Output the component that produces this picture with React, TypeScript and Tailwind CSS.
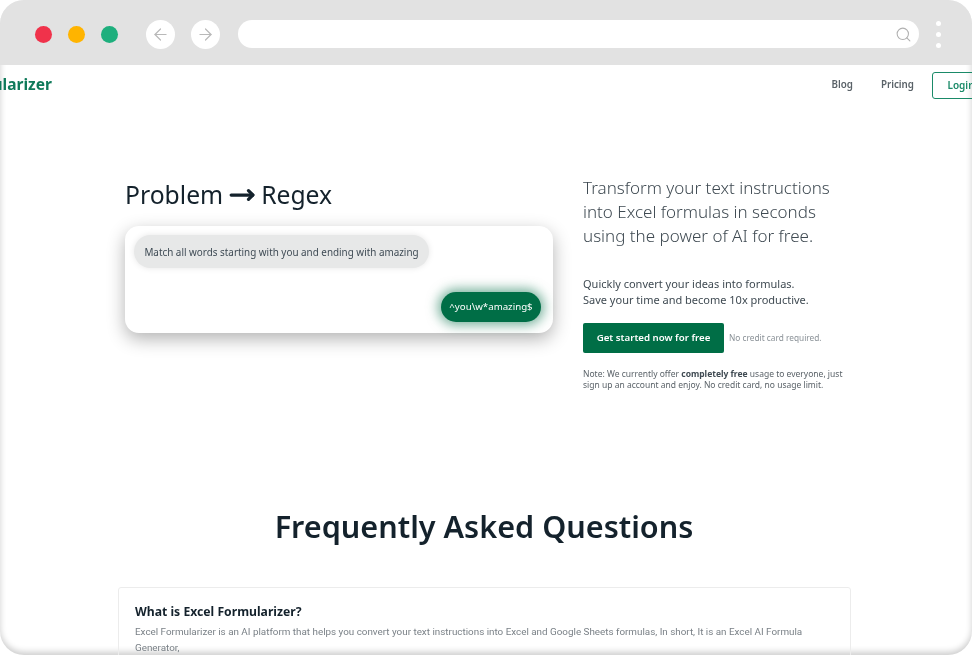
import { ArrowLeft, ArrowRight, MoveRight, Search } from 'lucide-react';

function BrowserBar() {
  return (
    <div className="flex h-[65px] shrink-0 items-center bg-[#e2e2e2] pl-[35px] pt-[3px]">
      <div className="flex gap-4">
        <span className="size-[17px] rounded-full bg-[#f0324b]" />
        <span className="size-[17px] rounded-full bg-[#ffb400]" />
        <span className="size-[17px] rounded-full bg-[#1eaf7d]" />
      </div>
      <div className="ml-[28px] flex gap-4">
        <button className="flex size-[29px] items-center justify-center rounded-full bg-white text-[#b9b9b9]">
          <ArrowLeft size={19} strokeWidth={1.5} />
        </button>
        <button className="flex size-[29px] items-center justify-center rounded-full bg-white text-[#b9b9b9]">
          <ArrowRight size={19} strokeWidth={1.5} />
        </button>
      </div>
      <div className="ml-[18px] flex h-[28px] w-[681px] items-center justify-end rounded-full bg-white pr-[7px] text-[#b0b0b0]">
        <Search size={17} strokeWidth={1.5} />
      </div>
      <div className="ml-[17px] flex flex-col gap-[6px]">
        <span className="size-[5px] rounded-full bg-white" />
        <span className="size-[5px] rounded-full bg-white" />
        <span className="size-[5px] rounded-full bg-white" />
      </div>
    </div>
  );
}

function Nav() {
  return (
    <div className="flex h-[40px] shrink-0 items-center justify-between">
      <span className="ml-[-91px] text-[15.5px] font-bold text-[#0f7a5a]">Excel Formularizer</span>
      <div className="mr-[-18px] flex items-center text-[9.8px] font-semibold text-[#5a6268]">
        <span>Blog</span>
        <span className="ml-[28px]">Pricing</span>
        <span className="ml-[18px] flex h-[27px] w-[58px] items-center justify-center rounded-[3px] border border-[#1a8a68] text-[10px] text-[#1a8a68]">
          Login
        </span>
      </div>
    </div>
  );
}

function Hero() {
  return (
    <div className="flex pl-[125px]">
      <div className="w-[428px]">
        <h2 className="mt-[73px] flex h-[33px] items-center text-[24.7px] leading-[33px] text-[#14222c]">
          Problem <MoveRight size={26} strokeWidth={3} className="mx-[6px]" /> Regex
        </h2>
        <div className="mt-[15px] flex h-[107px] flex-col rounded-[14px] bg-white p-[9px] pr-[12px] shadow-[0_6px_18px_rgba(0,0,0,0.3)]">
          <div className="flex h-[33px] w-[295px] items-center justify-center rounded-full bg-[#e7e8e8] pt-[1px] text-[9.9px] text-[#3e4a54] shadow-[0_0_6px_rgba(0,0,0,0.1)]">
            Match all words starting with you and ending with amazing
          </div>
          <div className="mt-[24px] flex h-[30px] w-[100px] items-center justify-center self-end rounded-full bg-[#006e46] text-[9.7px] text-white shadow-[0_0_12px_3px_rgba(0,110,70,0.55)]">
            ^you\w*amazing$
          </div>
        </div>
      </div>
      <div className="ml-[30px] w-[270px] pt-[71px]">
        <p className="text-[17px] leading-[24px] font-light text-[#3f4a52]">
          Transform your text instructions into Excel formulas in seconds using the power of AI for free.
        </p>
        <p className="mt-[28px] text-[11px] leading-[16px] text-[#3f4a52]">
          Quickly convert your ideas into formulas.
          <br />
          Save your time and become 10x productive.
        </p>
        <div className="mt-[15px] flex items-center">
          <button className="h-[30px] w-[141px] rounded-[2px] bg-[#006e46] text-[9.7px] font-semibold text-white">
            Get started now for free
          </button>
          <span className="ml-[5px] text-[8.3px] text-[#8a9197]">No credit card required.</span>
        </div>
        <p className="mt-[15px] text-[8.5px] leading-[11px] text-[#5a6268]">
          Note: We currently offer <b className="text-[#3f4a52]">completely free</b> usage to everyone, just sign up an account and enjoy. No credit card, no usage limit.
        </p>
      </div>
    </div>
  );
}

function Faq() {
  return (
    <div className="flex flex-col">
      <h1 className="mt-[116px] h-[40px] pr-[4px] text-center text-[30.6px] leading-[40px] font-semibold text-[#14222c]">Frequently Asked Questions</h1>
      <div className="ml-[118px] mt-[41px] h-[80px] w-[733px] rounded-t-[3px] border border-[#ececec] px-[16px] pt-[15px]">
        <h3 className="text-[12.2px] leading-[18px] font-bold text-[#14222c]">What is Excel Formularizer?</h3>
        <p className="mt-[3px] font-['Roboto',sans-serif] text-[9.85px] leading-[16px] text-[#7a8187]">
          Excel Formularizer is an AI platform that helps you convert your text instructions into Excel and Google Sheets formulas, In short, It is an Excel AI Formula Generator,
        </p>
      </div>
    </div>
  );
}

export default function App() {
  return (
    <div className="relative flex h-[655px] w-[972px] flex-col overflow-hidden rounded-[24px] bg-white font-['Noto_Sans',sans-serif] shadow-[inset_0_-3px_6px_rgba(0,0,0,0.2)] blur-[0.3px]">
      <BrowserBar />
      <Nav />
      <Hero />
      <Faq />
    </div>
  );
}
